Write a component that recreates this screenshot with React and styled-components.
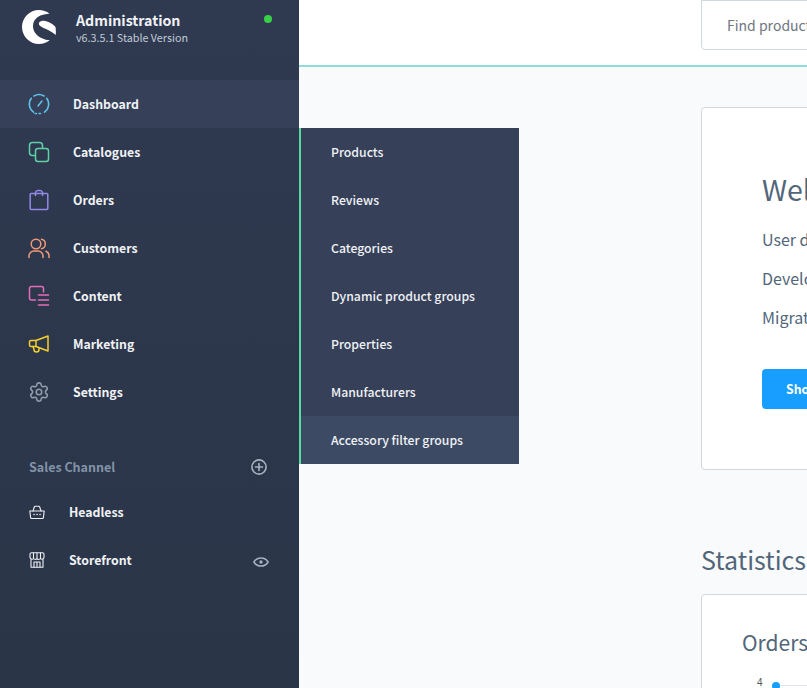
import React from 'react';
import styled, { createGlobalStyle } from 'styled-components';
import { Settings } from 'lucide-react';

const Global = createGlobalStyle`
  html, body { margin: 0; padding: 0; height: 100%; overflow: hidden; background: #f9fafb; }
  #root { height: 100%; }
  * { box-sizing: border-box; }
  body { font-family: "Noto Sans CJK SC", "Noto Sans", sans-serif; }
`;

const Shell = styled.div`
  display: flex;
  width: 807px;
  height: 688px;
  overflow: hidden;
  position: relative;
`;
const Sidebar = styled.aside`
  flex: 0 0 299px;
  height: 688px;
  background: linear-gradient(180deg, #2f3950 0%, #2b3548 100%);
  display: flex;
  flex-direction: column;
`;
const Brand = styled.header`
  height: 80px;
  flex: none;
  display: flex;
  align-items: flex-start;
  padding: 10px 0 0 22px;
  position: relative;
`;
const BrandText = styled.div`
  margin-left: 20px;
`;
const BrandTitle = styled.div`
  font-size: 14.2px;
  line-height: 20px;
  font-weight: 700;
  color: #f0f2f5;
`;
const BrandVersion = styled.div`
  font-size: 10.75px;
  line-height: 16px;
  font-weight: 400;
  color: #c0cbd6;
`;
const StatusDot = styled.span`
  position: absolute;
  left: 264px;
  top: 15px;
  width: 8px;
  height: 8px;
  border-radius: 50%;
  background: #37d046;
`;
const Nav = styled.nav`
  display: flex;
  flex-direction: column;
`;
const NavRow = styled.a`
  height: 48px;
  display: flex;
  align-items: center;
  padding-left: 28px;
  background: ${p => (p.$active ? '#364059' : 'transparent')};
`;
const NavIcon = styled.span`
  width: 22px;
  height: 22px;
  display: block;
  flex: none;
  svg { display: block; width: 22px; height: 22px; }
`;
const NavLabel = styled.span`
  margin-left: 23px;
  font-size: 12.3px;
  line-height: 18px;
  font-weight: 700;
  color: #f0f2f5;
`;
const ChannelHead = styled.div`
  margin: 36px 0 6px;
  height: 30px;
  display: flex;
  align-items: center;
  justify-content: space-between;
  padding: 0 32px 0 29px;
`;
const ChannelTitle = styled.span`
  font-size: 12.5px;
  line-height: 18px;
  font-weight: 700;
  color: #8293a8;
`;
const ChannelRow = styled.a`
  height: 48px;
  display: flex;
  align-items: center;
  padding: 0 30px 0 29px;
`;
const ChannelIcon = styled.span`
  width: 16px;
  height: 16px;
  flex: none;
  svg { display: block; width: 16px; height: 16px; }
`;
const ChannelLabel = styled.span`
  margin-left: 24px;
  font-size: 12.3px;
  line-height: 18px;
  font-weight: 700;
  color: #f0f2f5;
  flex: 1;
`;
const Flyout = styled.ul`
  position: absolute;
  left: 299px;
  top: 128px;
  width: 220px;
  margin: 0;
  padding: 0;
  list-style: none;
  background: #364059;
  border-left: 2px solid #57d9a3;
`;
const FlyoutItem = styled.li`
  height: 48px;
  display: flex;
  align-items: center;
  padding-left: 30px;
  font-size: 12.25px;
  line-height: 18px;
  font-weight: 500;
  color: #f0f2f5;
  white-space: nowrap;
  background: ${p => (p.$active ? '#3d4a64' : 'transparent')};
`;
const Main = styled.main`
  flex: 1;
  min-width: 0;
  height: 688px;
  overflow: hidden;
  display: flex;
  flex-direction: column;
`;
const TopBar = styled.div`
  flex: none;
  height: 67px;
  background: #fff;
  border-bottom: 2px solid #8fdcdc;
  padding-left: 402px;
`;
const Search = styled.div`
  width: 500px;
  height: 50px;
  border: 1px solid #d1d9e0;
  border-radius: 0 0 4px 4px;
  display: flex;
  align-items: center;
  padding-left: 25px;
  font-size: 14px;
  line-height: 20px;
  color: #6e7681;
  white-space: nowrap;
  background: #fff;
`;
const Content = styled.div`
  padding: 40px 0 0 402px;
  width: 1000px;
`;
const WelcomeCard = styled.section`
  width: 500px;
  height: 363px;
  background: #fff;
  border: 1px solid #d1d9e0;
  border-radius: 4px;
  padding: 60px 0 0 60px;
`;
const WelcomeTitle = styled.h1`
  margin: 0 0 17px;
  font-size: 28.5px;
  line-height: 42px;
  font-weight: 400;
  color: #52667a;
  white-space: nowrap;
`;
const DocLink = styled.div`
  font-size: 16px;
  line-height: 24px;
  margin-bottom: 15px;
  color: #52667a;
  white-space: nowrap;
`;
const Primary = styled.button`
  display: block;
  margin-top: 40px;
  width: 200px;
  height: 40px;
  border: 0;
  border-radius: 4px;
  background: #189eff;
  color: #fff;
  font-family: inherit;
  font-size: 12.3px;
  font-weight: 700;
  text-align: left;
  padding: 0 0 0 24px;
`;
const SectionTitle = styled.h2`
  margin: 71px 0 17px;
  font-size: 25px;
  line-height: 36px;
  font-weight: 400;
  color: #52667a;
`;
const StatsCard = styled.section`
  width: 500px;
  height: 300px;
  background: #fff;
  border: 1px solid #d1d9e0;
  border-radius: 4px;
  padding: 32px 0 0 40px;
  position: relative;
`;
const StatsTitle = styled.h3`
  margin: 0;
  font-size: 21px;
  line-height: 30px;
  font-weight: 400;
  color: #52667a;
`;
const AxisLabel = styled.span`
  position: absolute;
  left: 55px;
  top: 82px;
  font-size: 10px;
  line-height: 12px;
  color: #555;
  font-family: "Liberation Sans", sans-serif;
`;
const AxisLine = styled.div`
  position: absolute;
  left: 74px;
  top: 90px;
  width: 400px;
  height: 1px;
  background: #e0e6eb;
`;
const Point = styled.span`
  position: absolute;
  left: 70px;
  top: 87px;
  width: 8px;
  height: 8px;
  border-radius: 50%;
  background: #189eff;
`;

const Stroke = ({ color, children, w = 1.5 }) => (
  <svg viewBox="0 0 22 22" fill="none" stroke={color} strokeWidth={w} strokeLinecap="round" strokeLinejoin="round">{children}</svg>
);

const Logo = () => (
  <svg width="34" height="34" viewBox="0 0 34 34" style={{ flex: 'none', display: 'block' }}>
    <path fill="#fff" d="M27.500 3.500C24.500 1.200 20.800 0 17 0 7.600 0 0 7.600 0 17s7.600 17 17 17c4 0 7.800-1.400 10.800-3.800-5.300-.2-10.800-2.700-13.800-6.200-2.500-3-3.500-6.500-2.800-10 1.100-5.200 5.800-8.500 10.800-9.400 1.800-.4 3.800-.7 5.500-1.100z" />
    <path fill="#fff" d="M17 12.800c1.500-2.200 5-2.400 8-1.400 3.500 1.100 6.500 3.100 8.500 5.600.4 2.500.5 5.500.2 8-2.700-2.500-6.200-4.400-9.700-6-3-1.300-8-3-7-6.200z" />
  </svg>
);

const IconDash = () => (
  <Stroke color="#5fc3e8">
    <path d="M5.500 19.200A9.800 9.800 0 0 1 3.300 5.300" />
    <path d="M6 3A9.800 9.800 0 0 1 16 3" />
    <path d="M18.700 5.300a9.800 9.800 0 0 1-2.200 13.900" />
    <path d="M7 20.500h8" strokeDasharray="1.500 2.500" />
    <path d="M10 13l4-5" />
  </Stroke>
);
const IconCat = () => (
  <Stroke color="#5fd1a6">
    <rect x="1.500" y="1.500" width="13" height="13" rx="3" />
    <rect x="7.500" y="7.500" width="13" height="13" rx="2.500" fill="#2e384d" />
  </Stroke>
);
const IconBag = () => (
  <Stroke color="#9587e8">
    <path d="M3.200 4.500h15.600a1 1 0 0 1 1 1v14a1 1 0 0 1-1 1H3.200a1 1 0 0 1-1-1v-14a1 1 0 0 1 1-1z" />
    <path d="M7.500 6.500V3.500a2.500 2.500 0 0 1 2.500-2h2a2.500 2.500 0 0 1 2.500 2v3" />
  </Stroke>
);
const IconUsers = () => (
  <Stroke color="#ef9a76">
    <circle cx="8" cy="7" r="4.800" />
    <path d="M1 20.500v-1.500a5 5 0 0 1 5-5h4a5 5 0 0 1 5 5v1.500" />
    <path d="M13.500 2.300a4.800 4.800 0 0 1 0 9.400" />
    <path d="M18 14.300a5 5 0 0 1 3 4.700v1.500" />
  </Stroke>
);
const IconContent = () => (
  <Stroke color="#e36fb8">
    <path d="M7.500 15H3.500a2 2 0 0 1-2-2V3.500a2 2 0 0 1 2-2h10a2 2 0 0 1 2 2V7" />
    <path d="M10.500 10h10M10.500 15h10M10.500 20h10" />
  </Stroke>
);
const IconMegaphone = () => (
  <Stroke color="#f5d02e">
    <path d="M8 7.500l12-4.500v15l-12-4.500z" />
    <path d="M8 7.500H3a1.500 1.500 0 0 0-1.500 1.500v3A1.500 1.500 0 0 0 3 13.500h5" />
    <path d="M5 13.500l1 3a2.500 2.500 0 0 0 5 0v-1.800" />
  </Stroke>
);
const IconBasket = () => (
  <svg viewBox="0 0 16 16" fill="none" stroke="#eef1f4" strokeWidth="1.100" strokeLinejoin="round" strokeLinecap="round">
    <path d="M.8 7h14.400l-.8 6.500a1 1 0 0 1-1 1H2.600a1 1 0 0 1-1-1z" />
    <path d="M4 7l1.300-4a1 1 0 0 1 1-.7h3.400a1 1 0 0 1 1 .7L12 7" />
    <path d="M5 10.500h.1M8 10.500h.1M11 10.500h.1" strokeWidth="1.500" />
  </svg>
);
const IconStore = () => (
  <svg viewBox="0 0 16 16" fill="none" stroke="#eef1f4" strokeWidth="1.100" strokeLinejoin="round" strokeLinecap="round">
    <path d="M2.500.8h11a1.500 1.500 0 0 1 1.500 1.500v3a2 2 0 0 1-3.500 1.200 2.600 2.600 0 0 1-3.500.3 2.600 2.600 0 0 1-3.500-.3A2 2 0 0 1 1 5.300v-3A1.500 1.500 0 0 1 2.500.8z" />
    <path d="M4.500 1v5.600M8 1v6M11.500 1v5.600" />
    <path d="M2 7.500v7.700h12V7.500" />
    <path d="M5 15v-5h6v5M8 10v5" />
  </svg>
);
const IconPlus = () => (
  <svg width="16" height="16" viewBox="0 0 16 16" fill="none" stroke="#a5b3c2" strokeWidth="1.600" strokeLinecap="round">
    <circle cx="8" cy="8" r="7.100" />
    <path d="M8 4.500v7M4.500 8h7" />
  </svg>
);
const IconEye = () => (
  <svg width="16" height="10" viewBox="0 0 16 10" fill="none" stroke="#a5b3c2" strokeWidth="1.500" style={{ display: 'block', marginTop: 4 }}>
    <path d="M.9 5C2.500 2.300 5 .9 8 .9s5.500 1.400 7.100 4.100C13.500 7.700 11 9.100 8 9.100S2.500 7.700.9 5z" />
    <circle cx="8" cy="5" r="1.700" fill="#a5b3c2" stroke="none" />
  </svg>
);
const IconGear = () => <Settings color="#8f9cae" strokeWidth={1.7} />;

const navItems = [
  ['Dashboard', IconDash, true],
  ['Catalogues', IconCat],
  ['Orders', IconBag],
  ['Customers', IconUsers],
  ['Content', IconContent],
  ['Marketing', IconMegaphone],
  ['Settings', IconGear],
];
const subItems = ['Products', 'Reviews', 'Categories', 'Dynamic product groups', 'Properties', 'Manufacturers', 'Accessory filter groups'];

export default function App() {
  return (
    <Shell>
      <Global />
      <Sidebar>
        <Brand>
          <Logo />
          <BrandText>
            <BrandTitle>Administration</BrandTitle>
            <BrandVersion>v6.3.5.1 Stable Version</BrandVersion>
          </BrandText>
          <StatusDot />
        </Brand>
        <Nav>
          {navItems.map(([label, Icon, active]) => (
            <NavRow key={label} $active={active}>
              <NavIcon><Icon /></NavIcon>
              <NavLabel>{label}</NavLabel>
            </NavRow>
          ))}
        </Nav>
        <ChannelHead>
          <ChannelTitle>Sales Channel</ChannelTitle>
          <IconPlus />
        </ChannelHead>
        <ChannelRow>
          <ChannelIcon><IconBasket /></ChannelIcon>
          <ChannelLabel>Headless</ChannelLabel>
        </ChannelRow>
        <ChannelRow>
          <ChannelIcon><IconStore /></ChannelIcon>
          <ChannelLabel>Storefront</ChannelLabel>
          <IconEye />
        </ChannelRow>
      </Sidebar>
      <Flyout>
        {subItems.map((s, i) => (
          <FlyoutItem key={s} $active={i === subItems.length - 1}>{s}</FlyoutItem>
        ))}
      </Flyout>
      <Main>
        <TopBar>
          <Search>Find products, customers, orders...</Search>
        </TopBar>
        <Content>
          <WelcomeCard>
            <WelcomeTitle>Welcome to Shopware 6</WelcomeTitle>
            <DocLink>User documentation</DocLink>
            <DocLink>Developer documentation</DocLink>
            <DocLink>Migration guide</DocLink>
            <Primary>Show more</Primary>
          </WelcomeCard>
          <SectionTitle>Statistics</SectionTitle>
          <StatsCard>
            <StatsTitle>Orders</StatsTitle>
            <AxisLabel>4</AxisLabel>
            <AxisLine />
            <Point />
          </StatsCard>
        </Content>
      </Main>
    </Shell>
  );
}
